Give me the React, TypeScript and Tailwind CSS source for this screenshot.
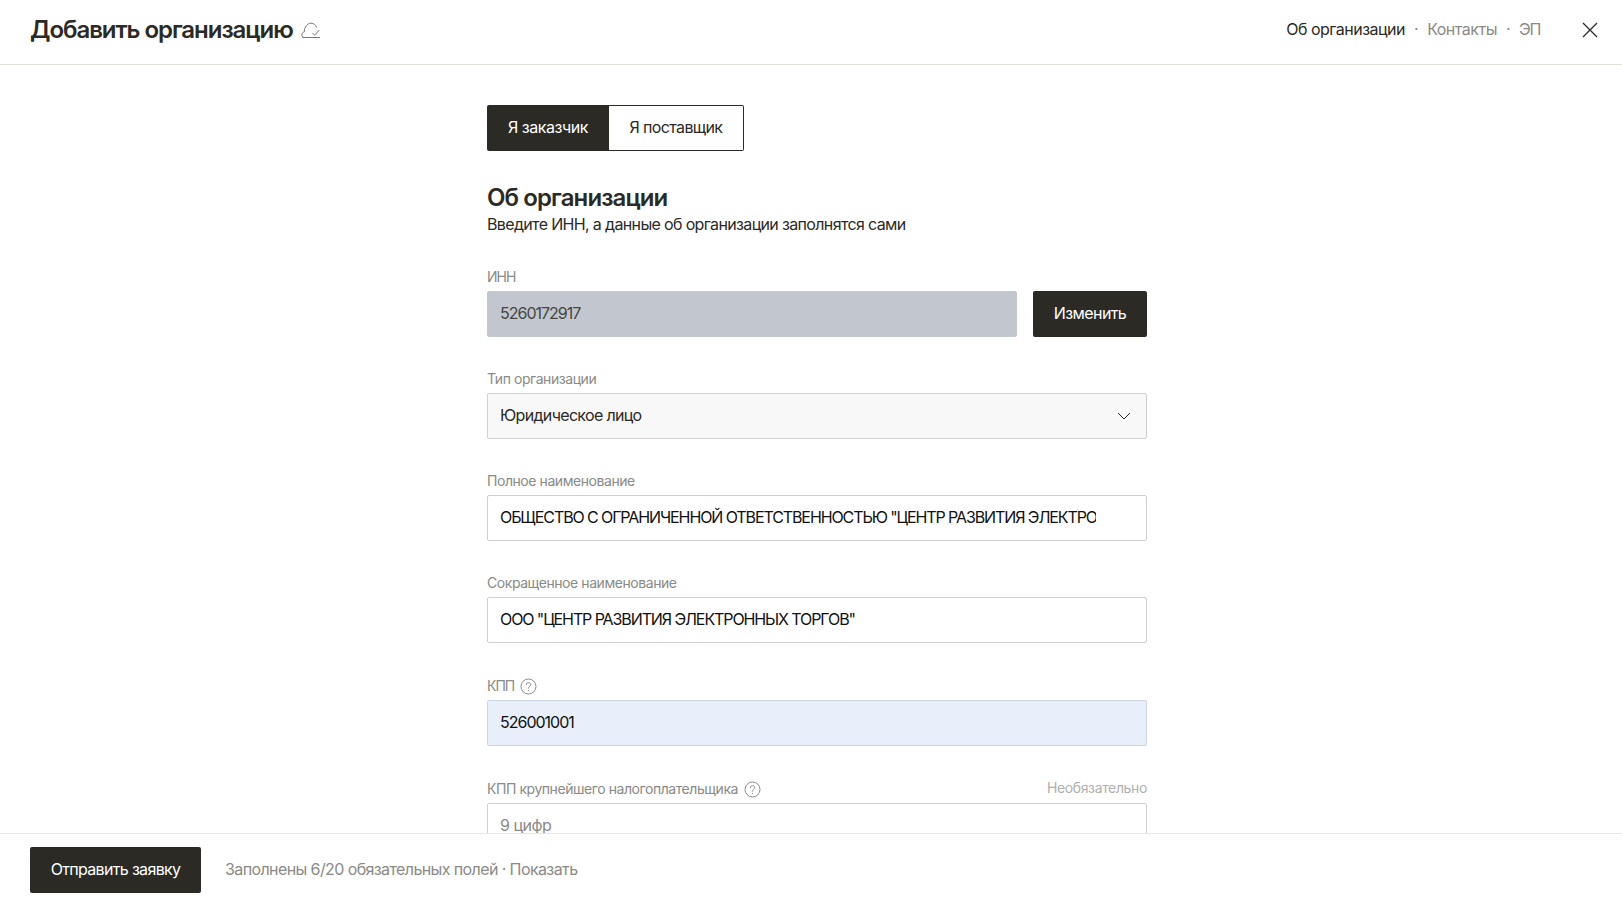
import React from "react";

const font = "font-['Inter','Liberation_Sans',sans-serif]";

function Help() {
  return (
    <svg width="17" height="17" viewBox="0 0 17 17" fill="none" stroke="#8a8a86" strokeWidth="1" className="shrink-0">
      <circle cx="8.5" cy="8.5" r="7.5" />
      <path d="M6.3 6.7c0-1.3 1-2.1 2.2-2.1s2.2.8 2.2 2c0 1.9-2.2 1.8-2.2 3.6" strokeLinecap="round" />
      <circle cx="8.5" cy="12.4" r="0.6" fill="#8a8a86" stroke="none" />
    </svg>
  );
}

function Label({
  children,
  help,
  optional,
  tight,
}: {
  children: React.ReactNode;
  help?: boolean;
  optional?: boolean;
  tight?: boolean;
}) {
  return (
    <div className="flex h-[20px] items-center justify-between text-[14px] leading-[20px] tracking-[-0.44px] text-[#8a8a86]">
      <div className="flex items-center gap-[6px]">
        <span className={tight ? "tracking-[-1px]" : ""}>{children}</span>
        {help && <Help />}
      </div>
      {optional && <span className="-mt-[3px] tracking-[-0.36px] text-[#b0b0ac]">Необязательно</span>}
    </div>
  );
}

function Field({
  label,
  value,
  help,
  optional,
  tight,
  cls,
  placeholder,
}: {
  label: string;
  value?: string;
  help?: boolean;
  optional?: boolean;
  tight?: boolean;
  cls: string;
  placeholder?: string;
}) {
  return (
    <div>
      <Label help={help} optional={optional} tight={tight}>{label}</Label>
      <input
        readOnly
        value={value ?? ""}
        placeholder={placeholder}
        className={`mt-[4px] block h-[46px] w-full rounded-[2px] border pb-[2px] pl-[12px] pr-[50px] text-[16px] outline-none placeholder:text-[#8a8a86] ${cls}`}
      />
    </div>
  );
}

export default function App() {
  return (
    <div className={`flex h-screen flex-col overflow-hidden bg-white text-[#2b2a25] ${font}`}>
      <header className="flex h-[65px] shrink-0 items-center justify-between border-b border-[#e0dfd8] pb-[4px] pl-[30px] pr-[23px]">
        <div className="flex items-center gap-[8px]">
          <h1 className="text-[24px] font-semibold leading-[32px] tracking-[-1.05px]">Добавить организацию</h1>
          <svg width="20" height="17" viewBox="0 0 20 17" fill="none" stroke="#77776f" strokeWidth="1">
            <path d="M4.5 15.5H3.6C1.9 15.5.8 14.3.8 12.8c0-1.5 1-2.6 2.5-2.8C3.2 5 6.4 1.2 10 1.2c2.6 0 4.7 1.6 5.5 4" strokeLinecap="round" />
            <path d="M1.5 15.5h17.5" />
            <path d="M11.5 11l2.2 2.2 4.6-5.2" />
          </svg>
        </div>
        <div className="flex items-center">
          <nav className="-mt-[2px] flex items-center text-[16px] tracking-[-0.5px] text-[#8a8a86]">
            <span className="text-[#2b2a25]">Об организации</span>
            <span className="mx-[9px]">·</span>
            <span>Контакты</span>
            <span className="mx-[9px]">·</span>
            <span className="tracking-[-1.3px]">ЭП</span>
          </nav>
          <svg width="18" height="18" viewBox="0 0 18 18" fill="none" stroke="#2b2a25" strokeWidth="1.3" className="ml-[41px]">
            <path d="M2 2l14 14M16 2L2 16" />
          </svg>
        </div>
      </header>

      <main className="min-h-0 flex-1 overflow-hidden">
        <div className="ml-[487px] w-[660px] pt-[40px]">
          <div className="flex h-[46px] w-[257px] text-[16px]">
            <div className="flex w-[122px] items-center justify-center rounded-l-[2px] bg-[#2b2a25] pb-[2px] tracking-[-0.45px] text-white">Я заказчик</div>
            <div className="flex flex-1 items-center justify-center rounded-r-[2px] border border-l-0 border-[#2b2a25] pb-[2px] tracking-[-0.65px]">Я поставщик</div>
          </div>
          <h2 className="mt-[31px] text-[24px] font-semibold leading-[32px] tracking-[-0.9px]">Об организации</h2>
          <p className="text-[16px] leading-[21px] tracking-[-0.65px]">Введите ИНН, а данные об организации заполнятся сами</p>

          <div className="mt-[32px] flex flex-col gap-[32px]">
            <div>
              <Label tight>ИНН</Label>
              <div className="mt-[4px] flex gap-[16px]">
                <input
                  readOnly
                  value="5260172917"
                  className="block h-[46px] min-w-0 flex-1 rounded-[2px] border border-[#c2c7cf] bg-[#c2c7cf] pb-[2px] pl-[12px] text-[16px] tracking-[-1px] text-[#45453f] outline-none"
                />
                <button className="h-[46px] w-[114px] rounded-[2px] bg-[#2b2a25] pb-[2px] text-[16px] tracking-[-0.6px] text-white">Изменить</button>
              </div>
            </div>

            <div>
              <Label>Тип организации</Label>
              <div className="mt-[4px] flex h-[46px] items-center justify-between rounded-[2px] border border-[#cfcfcb] bg-[#f8f8f8] pl-[12px] pr-[15px] text-[16px] tracking-[-0.67px]">
                <span className="-mt-[2px]">Юридическое лицо</span>
                <svg width="14" height="8" viewBox="0 0 14 8" fill="none" stroke="#2b2a25" strokeWidth="1">
                  <path d="M1 1l6 6 6-6" />
                </svg>
              </div>
            </div>

            <Field
              label="Полное наименование"
              value={'ОБЩЕСТВО С ОГРАНИЧЕННОЙ ОТВЕТСТВЕННОСТЬЮ "ЦЕНТР РАЗВИТИЯ ЭЛЕКТРОННЫХ ТОРГОВ"'}
              cls="border-[#cfcfcb] bg-white tracking-[-1.1px] text-[#111]"
            />
            <Field
              label="Сокращенное наименование"
              value={'ООО "ЦЕНТР РАЗВИТИЯ ЭЛЕКТРОННЫХ ТОРГОВ"'}
              cls="mb-[1px] border-[#cfcfcb] bg-white tracking-[-1.1px] text-[#111]"
            />
            <Field label="КПП" help tight value="526001001" cls="mb-[1px] border-[#cdd4e2] bg-[#e8effb] tracking-[-1px] text-[#111]" />
            <Field label="КПП крупнейшего налогоплательщика" help optional placeholder="9 цифр" cls="border-[#cfcfcb] bg-white tracking-[-0.5px]" />
          </div>
        </div>
      </main>

      <footer className="flex h-[71px] shrink-0 items-center gap-[24px] border-t border-[#e6e6e3] bg-white pl-[30px] pt-[1px]">
        <button className="h-[46px] w-[171px] rounded-[2px] bg-[#2b2a25] pb-[2px] text-[16px] tracking-[-0.67px] text-white">Отправить заявку</button>
        <div className="pb-[2px] text-[16px] tracking-[-0.6px] text-[#8a8a86]">Заполнены 6/20 обязательных полей · Показать</div>
      </footer>
    </div>
  );
}
